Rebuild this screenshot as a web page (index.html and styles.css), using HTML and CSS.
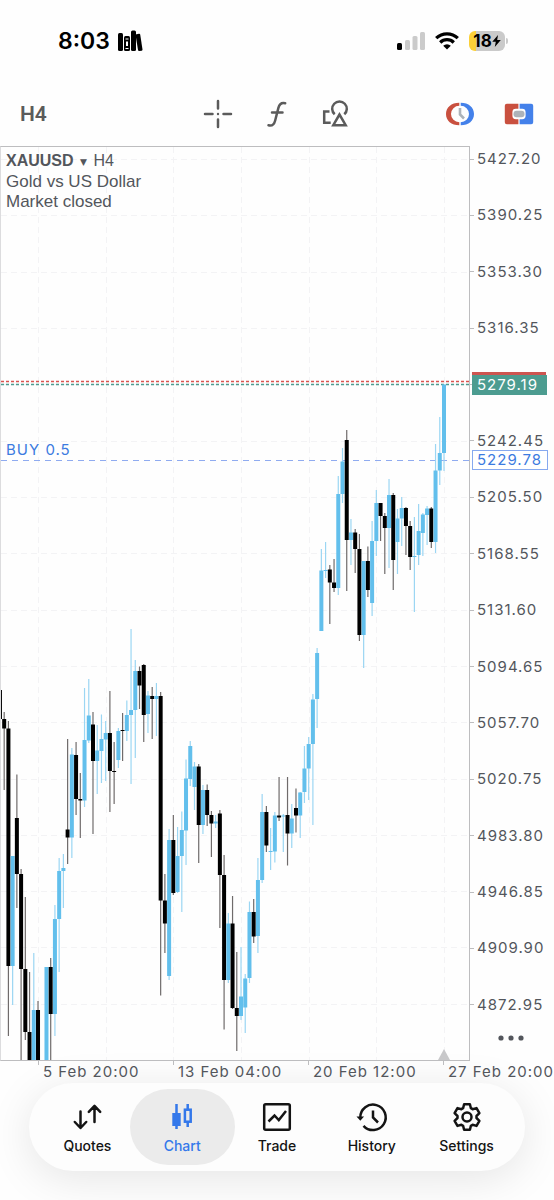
FILE: index.html
```html
<!DOCTYPE html>
<html lang="en">
<head>
    <meta charset="UTF-8">
    <meta name="viewport" content="width=device-width, initial-scale=1">
    <title>XAUUSD H4</title>
    <link rel="stylesheet" href="styles.css">
</head>
<body>
    <div class="status-bar">
        <div class="status-left">
            <span class="clock">8:03</span>
            <svg width="26" height="22" viewBox="0 0 26 22">
                <rect x="1" y="3" width="5" height="18" rx="1.5"/>
                <rect x="7" y="6" width="6" height="15" rx="1.5"/>
                <path d="M8.5 9h3M8.5 18.5h3" stroke="#fff" stroke-width="1"/>
                <rect x="9" y="11.500" width="2" height="4.500" fill="#fff"/>
                <rect x="14" y="0.500" width="5" height="20.500" rx="1.5"/>
                <path d="M18.500 4.500l3.500-.8q1-.2 1.200.8l2.300 15q.1 1-.8 1.200l-2.500.3q-1 0-1.200-1z"/>
            </svg>
        </div>
        <div class="status-right">
            <svg width="28" height="18" viewBox="0 0 28 18">
                <rect x="0" y="11" width="5" height="7" rx="1.5"/>
                <g fill="#cbcbcb">
                    <rect x="8" y="8" width="5" height="10" rx="1.5"/>
                    <rect x="15.500" y="4" width="5" height="14" rx="1.5"/>
                    <rect x="23" y="0" width="5" height="18" rx="1.5"/>
                </g>
            </svg>
            <svg width="24" height="18" viewBox="0 0 24 18">
                <g fill="none" stroke="#000" stroke-width="3.200">
                    <path d="M1.200 6.200a15.400 15.400 0 0 1 21.600 0"/>
                    <path d="M5.200 10.500a9.600 9.600 0 0 1 13.600 0"/>
                </g>
                <path d="M8.200 13.700a5.400 5.400 0 0 1 7.600 0L12 17.600z"/>
            </svg>
            <div class="battery">
                <span>18</span>
                <svg width="9" height="12" viewBox="0 0 9 12"><path d="M6 0L.3 6.700h3.500L2.800 12l6-7H5.200z"/></svg>
            </div>
        </div>
    </div>

    <div class="toolbar">
        <button class="timeframe">H4</button>
        <div class="tools">
            <button class="icon-btn" aria-label="Crosshair">
                <svg class="icon" viewBox="0 0 30 30">
                    <path d="M2 15h7.500M20.500 15H28M15 2v7.500M15 20.500V28" stroke-linecap="round"/>
                    <circle cx="15" cy="15" r="1.200" class="solid"/>
                </svg>
            </button>
            <button class="icon-btn" aria-label="Indicators">
                <svg class="icon" viewBox="0 0 30 30">
                    <path d="M6.500 26.300c3.600.9 5.600-.8 6.600-4.600l3.300-12.800c1-3.900 3-5.600 6.800-4.700M10 13.500h10.500" stroke-linecap="round"/>
                </svg>
            </button>
            <button class="icon-btn" aria-label="Objects">
                <svg class="icon" viewBox="0 0 30 30">
                    <path d="M8.500 12.500H3.200v11.300h6.500"/>
                    <path d="M13.700 15.300a7.300 7.300 0 1 1 9.600 0"/>
                    <path d="M18.500 15.500l-6.200 10.700h12.400z"/>
                </svg>
            </button>
        </div>
        <div class="actions">
            <button class="icon-btn" aria-label="Trading session">
                <svg viewBox="0 0 30 30">
                    <path d="M14.300 3.700C6.300 3.700 1 8.300 1 15s5.300 11.300 13.300 11.300v-3a8.300 8.300 0 0 1 0-16.600z" fill="#c9503f"/>
                    <path d="M15.700 3.700C23.700 3.700 29 8.300 29 15s-5.300 11.300-13.300 11.300v-3a8.300 8.300 0 0 0 0-16.600z" fill="#4481ea"/>
                    <path d="M15 9v6.500l4 4" fill="none" stroke="#adb3b9" stroke-width="2.600"/>
                </svg>
            </button>
            <button class="icon-btn" aria-label="One click trading">
                <svg viewBox="0 0 30 30">
                    <path d="M14.400 4.800H2.800q-2 0-2 2v16.400q0 2 2 2h11.600v-5h-2.600q-3.400 0-3.400-3.400v-3.600q0-3.400 3.400-3.400h2.600z" fill="#c9503f"/>
                    <path d="M15.600 4.800h11.600q2 0 2 2v16.400q0 2-2 2H15.600v-5h2.600q3.400 0 3.400-3.400v-3.600q0-3.400-3.400-3.400h-2.600z" fill="#4481ea"/>
                    <rect x="9.500" y="11.800" width="11" height="6.400" rx="3" fill="#adb3b9"/>
                </svg>
            </button>
        </div>
    </div>

    <main class="chart">
        <div class="plot">
            <svg id="candles"></svg>
            <div class="symbol-info">
                <div><b>XAUUSD</b> <span class="caret">▼</span> H4</div>
                <div class="symbol-line">Gold vs US Dollar</div>
                <div class="symbol-line">Market closed</div>
            </div>
            <div class="position-label">BUY 0.5</div>
        </div>
        <div class="price-axis">
            <ul class="price-list">
                <li>5427.20</li>
                <li>5390.25</li>
                <li>5353.30</li>
                <li>5316.35</li>
                <li></li>
                <li>5242.45</li>
                <li>5205.50</li>
                <li>5168.55</li>
                <li>5131.60</li>
                <li>5094.65</li>
                <li>5057.70</li>
                <li>5020.75</li>
                <li>4983.80</li>
                <li>4946.85</li>
                <li>4909.90</li>
                <li>4872.95</li>
            </ul>
            <div class="tag tag-ask"></div>
            <div class="tag tag-bid">5279.19</div>
            <div class="tag tag-open">5229.78</div>
            <button class="more" aria-label="More">
                <svg width="26" height="6" viewBox="0 0 26 6" fill="currentColor">
                    <circle cx="3" cy="3" r="2.600"/>
                    <circle cx="13" cy="3" r="2.600"/>
                    <circle cx="23" cy="3" r="2.600"/>
                </svg>
            </button>
        </div>
    </main>

    <ul class="time-axis">
        <li>5 Feb 20:00</li>
        <li>13 Feb 04:00</li>
        <li>20 Feb 12:00</li>
        <li>27 Feb 20:00</li>
    </ul>

    <nav class="tab-bar">
        <button class="tab">
            <svg class="icon" viewBox="0 0 30 30">
                <path d="M8.500 9.500v16M2.800 20l5.700 6 5.700-6M22.500 20V4M16.800 9.800l5.700-6 5.700 6" stroke-linecap="round" stroke-linejoin="round"/>
            </svg>
            Quotes
        </button>
        <button class="tab active">
            <svg class="icon" viewBox="0 0 30 30">
                <path d="M9.500 2v25M20.700 2v5M20.700 20v5"/>
                <rect x="5.300" y="11" width="8.400" height="13" class="solid"/>
                <rect x="17.900" y="7.700" width="5.800" height="12"/>
            </svg>
            Chart
        </button>
        <button class="tab">
            <svg class="icon" viewBox="0 0 30 30">
                <rect x="2.200" y="2.200" width="25.600" height="25.600" rx="1.500"/>
                <path d="M6.500 19.500l6-6 4.300 4.500 7.200-9"/>
            </svg>
            Trade
        </button>
        <button class="tab">
            <svg class="icon" viewBox="0 0 30 30">
                <path d="M3.300 15.500A12.700 12.700 0 1 1 6.500 23.800"/>
                <path d="M-.5 14.500h7.600L3.300 18.700z" class="solid"/>
                <path d="M16 8.500v7l5 5"/>
            </svg>
            History
        </button>
        <button class="tab">
            <svg class="icon" viewBox="0 0 30 30">
                <path d="M12.100 2.300h5.800l1 3.900 1.700 1 3.900-1.100 2.900 5.100-2.900 2.800v2l2.900 2.800-2.900 5.100-3.900-1.100-1.700 1-1 3.900h-5.800l-1-3.900-1.700-1-3.900 1.100-2.900-5.100L5.500 16v-2l-2.900-2.800 2.900-5.100 3.900 1.100 1.700-1z" stroke-linejoin="round"/>
                <circle cx="15" cy="15" r="4.500"/>
            </svg>
            Settings
        </button>
    </nav>

    <script src="chart.js"></script>
</body>
</html>
```

FILE: styles.css
```css
* {
    box-sizing: border-box;
}

body {
    margin: 0;
    background: #fefefe;
    color: #53565c;
    font-family: Inter, "Liberation Sans", sans-serif;
    overflow-x: hidden;
}

button {
    background: none;
    border: 0;
    padding: 0;
    color: inherit;
    font-family: inherit;
}

ul {
    list-style: none;
    margin: 0;
    padding: 0;
}

svg {
    display: block;
}

.icon {
    fill: none;
    stroke: currentColor;
    stroke-width: 2.5;
    overflow: visible;
}

.icon .solid {
    fill: currentColor;
    stroke: none;
}

/* status bar */
.status-bar {
    display: flex;
    justify-content: space-between;
    align-items: center;
    height: 82px;
    padding: 0 49px 0 58px;
    color: #000;
}

.status-left,
.status-right {
    display: flex;
    align-items: center;
}

.status-left {
    gap: 7px;
}

.status-right {
    gap: 10px;
}

.clock {
    font-size: 23px;
    font-weight: 600;
}

.battery {
    position: relative;
    display: flex;
    align-items: center;
    justify-content: center;
    width: 36px;
    height: 20px;
    border-radius: 6px;
    background: linear-gradient(90deg, #fbd038 7px, #cacaca 7px);
    font-size: 17px;
    font-weight: 700;
}

.battery::after {
    content: "";
    position: absolute;
    right: -3px;
    top: 7px;
    width: 2px;
    height: 6px;
    border-radius: 0 2px 2px 0;
    background: #cacaca;
}

/* toolbar */
.toolbar {
    display: grid;
    grid-template-columns: 1fr auto 1fr;
    align-items: center;
    height: 64px;
    padding: 0 20px;
    color: #5b5b5b;
}

.timeframe {
    justify-self: start;
    font-family: Roboto, sans-serif;
    font-size: 21px;
    font-weight: 600;
}

.tools,
.actions {
    display: flex;
    gap: 29px;
}

.actions {
    justify-self: end;
}

.icon-btn,
.icon-btn svg {
    width: 30px;
    height: 30px;
}

/* chart */
.chart {
    display: flex;
}

.plot {
    position: relative;
    flex: 1;
    min-width: 0;
    border: 1px solid #bdbdbf;
    border-left-color: #dcdcde;
}

#candles {
    width: 100%;
    height: 913px;
}

.symbol-info {
    position: absolute;
    left: 5px;
    top: 4px;
    font-family: "Liberation Sans", sans-serif;
    font-size: 16px;
    line-height: 20px;
}

.symbol-line {
    font-size: 17px;
}

.caret {
    margin: 0 2px;
    font-family: "DejaVu Sans", sans-serif;
    font-size: 9px;
    vertical-align: 1px;
}

.position-label {
    position: absolute;
    left: 5px;
    top: 293px;
    color: #3c7be0;
    font-size: 15px;
    line-height: 20px;
    letter-spacing: 1px;
}

.price-axis {
    position: relative;
    flex: 0 0 84px;
    display: flex;
    font-size: 15px;
    line-height: 20px;
    letter-spacing: 1px;
}

.price-list {
    flex: 1;
    display: flex;
    flex-direction: column;
    justify-content: space-between;
    padding: 3px 0 46px;
}

.price-list li {
    display: flex;
    align-items: center;
    gap: 3px;
    height: 20px;
}

.price-list li::before {
    content: "";
    width: 4px;
    height: 1px;
    background: #bdbdbf;
}

.tag {
    position: absolute;
    left: 2px;
    width: 76px;
    height: 20px;
    padding-left: 5px;
}

.tag-ask {
    top: 226px;
    width: 74px;
    background: #cd5550;
}

.tag-bid {
    top: 229px;
    width: 75px;
    background: #4c9c90;
    color: #fff;
}

.tag-open {
    top: 304px;
    padding-left: 4px;
    border: 1px solid #86a9ef;
    background: #fff;
    color: #3c7be0;
    line-height: 18px;
}

.more {
    position: absolute;
    right: 30px;
    bottom: 13px;
    padding: 7px 0;
}

.time-axis {
    display: flex;
    justify-content: flex-end;
    height: 22px;
    font-size: 15px;
    line-height: 22px;
    letter-spacing: 1px;
    white-space: nowrap;
}

.time-axis li {
    position: relative;
    flex: 0 0 135px;
}

.time-axis li:last-child {
    flex-basis: 106px;
}

.time-axis li::before {
    content: "";
    position: absolute;
    left: -5px;
    top: 0;
    width: 1px;
    height: 4px;
    background: #bdbdbf;
}

/* bottom tabs */
.tab-bar {
    display: flex;
    margin: 0 29px 30px;
    padding: 6px 11px;
    border-radius: 44px;
    background: #fdfdfd;
    box-shadow: 0 8px 44px rgba(0, 0, 0, 0.1);
}

.tab {
    flex: 1;
    display: flex;
    flex-direction: column;
    align-items: center;
    gap: 5px;
    height: 76px;
    margin: 0 -5px;
    padding-top: 13px;
    border-radius: 38px;
    color: #141414;
    font-size: 14px;
    font-weight: 500;
    line-height: 18px;
}

.tab svg {
    width: 30px;
    height: 30px;
}

.tab.active {
    background: #ebebeb;
    color: #3478ea;
}
```

FILE: chart.js
```js
const svg = document.getElementById('candles');
const NS = 'http://www.w3.org/2000/svg';

const TOP = 147;
const STEP = 4.229;
const RIGHT = 25;
const UP = '#62bfec';
const DOWN = '#000';

// [direction, high, body top, body bottom, low]
const candles = [
    ['d', 690, 690, 719, 719], ['d', 712, 719, 728.5, 790], ['d', 721, 728.5, 966, 1036],
    ['u', 856, 856, 966, 1005], ['d', 774.5, 818, 874, 908], ['d', 869, 874, 969, 1060],
    ['d', 897, 969, 1032, 1040], ['d', 972, 1032, 1060, 1060], ['u', 953, 1010, 1060, 1060],
    ['d', 1001, 1010, 1060, 1060], null, ['u', 967, 967, 1060, 1060],
    ['d', 958, 967, 1014, 1060], ['u', 905, 919, 1014, 1036], ['u', 858, 871, 919, 972],
    ['u', 854, 868, 871, 908], ['d', 739, 829.5, 837.5, 864], ['u', 748, 754.5, 837.5, 858],
    ['d', 742, 755, 799, 815], ['d', 773, 799, 800.5, 838], ['u', 688, 740, 800.5, 807],
    ['u', 679, 715.5, 740.5, 743], ['d', 712, 724.5, 761, 834], ['u', 725, 750.5, 761, 794],
    ['u', 714.5, 739, 751, 783], ['u', 721, 733, 739.5, 781], ['d', 691, 733, 771, 812],
    ['d', 742, 771, 772, 804], ['u', 728, 731, 760, 768], ['d', 713, 730, 731, 761],
    ['u', 700.5, 715, 731, 741], ['u', 629, 710, 715, 784], ['u', 660, 671, 710, 758],
    ['d', 666.5, 671, 685.5, 709], ['d', 664, 665, 715, 742], ['u', 691, 695.5, 714, 733],
    ['d', 687, 696, 699, 739], ['u', 683, 696, 699, 736], ['d', 692, 696, 900.5, 995.5],
    ['d', 874, 900.5, 923.5, 953], ['u', 829, 840, 976, 980], ['d', 815, 840, 893, 895],
    ['u', 827, 856, 892, 893], ['u', 811.5, 830, 856, 912], ['u', 759.5, 778.5, 830.5, 865],
    ['u', 741, 746, 779, 786], ['u', 762, 766.5, 787, 810], ['d', 764, 766.5, 825, 863],
    ['u', 785, 790, 825, 834], ['d', 784.5, 790, 815, 826], ['d', 811, 815, 823.5, 857],
    ['u', 815, 821.5, 823.5, 828], ['d', 810, 813.5, 875, 928], ['d', 855, 875, 980, 1029.5],
    ['u', 913, 923.5, 980, 983], ['d', 896, 923.5, 1008, 1009], ['d', 952, 1008, 1016, 1051],
    ['u', 947, 996.5, 1016, 1020], ['u', 974, 978.5, 1007.5, 1033], ['u', 901.5, 912, 978, 983],
    ['d', 899, 912, 936.5, 943], ['u', 858, 880, 936, 953], ['u', 794, 812, 880, 883],
    ['d', 806, 812, 845.5, 852], ['u', 828, 851, 852, 870], ['u', 812, 815.5, 851.5, 862.5],
    ['d', 777, 815.5, 817.5, 821], ['u', 814, 815.5, 816.5, 852], ['d', 777, 815, 833.5, 865.5],
    ['u', 804, 818.5, 833.5, 848], ['d', 788.5, 808, 815.5, 832.5], ['u', 792, 792.5, 815.5, 838],
    ['u', 746, 768.5, 792, 803], ['u', 737, 744, 768.5, 800], ['u', 694, 699.5, 744, 825],
    ['u', 648, 653, 699, 728], ['u', 549, 570.5, 631, 631], ['u', 542, 570, 571, 578],
    ['d', 565, 569.5, 582.5, 624], ['d', 559, 582.5, 588, 592], ['u', 476, 494, 588, 595],
    ['u', 448, 461.5, 494, 503], ['d', 430, 440, 540, 591], ['u', 519, 532.5, 540, 565],
    ['d', 529, 532.5, 549, 573], ['d', 534, 549, 635, 641], ['u', 561, 561, 635, 668],
    ['d', 546.5, 561, 590, 597], ['u', 521, 541, 603, 616], ['u', 490, 503, 541, 556],
    ['d', 503, 503, 516, 541], ['d', 513, 516, 528, 574], ['u', 479, 495, 528, 568],
    ['d', 493, 495, 560, 590], ['u', 509, 518.5, 542, 574], ['u', 497, 508, 518.5, 546],
    ['d', 507, 508, 526, 555], ['d', 521, 526, 557, 570], ['u', 517, 556, 557, 612],
    ['u', 504, 531, 555, 565], ['u', 513, 514.5, 533, 556], ['u', 506, 508.5, 515, 545],
    ['d', 507, 508.5, 542, 548], ['u', 444, 470.5, 542, 553], ['u', 417, 453, 470.5, 485],
    ['u', 384.5, 384.5, 453, 471]
];

function add(name, attrs) {
    const el = document.createElementNS(NS, name);
    for (const key in attrs) el.setAttribute(key, attrs[key]);
    svg.appendChild(el);
}

function line(x1, y1, x2, y2, stroke, dash, width) {
    add('line', { x1, y1, x2, y2, stroke, 'stroke-dasharray': dash || 'none', 'stroke-width': width || 1 });
}

function draw() {
    svg.innerHTML = '';
    const w = svg.clientWidth;
    const h = svg.clientHeight;
    const last = w - RIGHT;

    // grid
    for (let i = 0; i < 16; i++) {
        const y = Math.round(12 + i * 56.32) + 0.5;
        line(0, y, w, y, '#f3f3f5', '6 4');
    }
    for (let x = last; x > 0; x -= STEP * 16) {
        line(Math.round(x) + 0.5, 0, Math.round(x) + 0.5, h, '#f3f3f5', '6 4');
    }

    // open position, ask and bid
    line(0, 313.5, w, 313.5, '#8fabf0', '6 5');
    line(0, 234.5, w, 234.5, '#d9534f', '3 2', 1.5);
    line(0, 237.5, w, 237.5, '#4c9c90', '3 2', 1.5);

    candles.forEach((c, i) => {
        if (!c) return;
        const x = last - (candles.length - 1 - i) * STEP;
        const up = c[0] === 'u';
        line(x, c[1] - TOP, x, c[4] - TOP, up ? '#9bd6f3' : '#6f6b6b', null, 1.2);
        add('rect', { x: x - 2, y: c[2] - TOP, width: 4, height: c[3] - c[2], fill: up ? UP : DOWN });
    });

    add('path', { d: `M${last - 6} ${h}l6 -11l6 11z`, fill: '#c8c8ca' });
}

draw();
window.addEventListener('resize', draw);
```
